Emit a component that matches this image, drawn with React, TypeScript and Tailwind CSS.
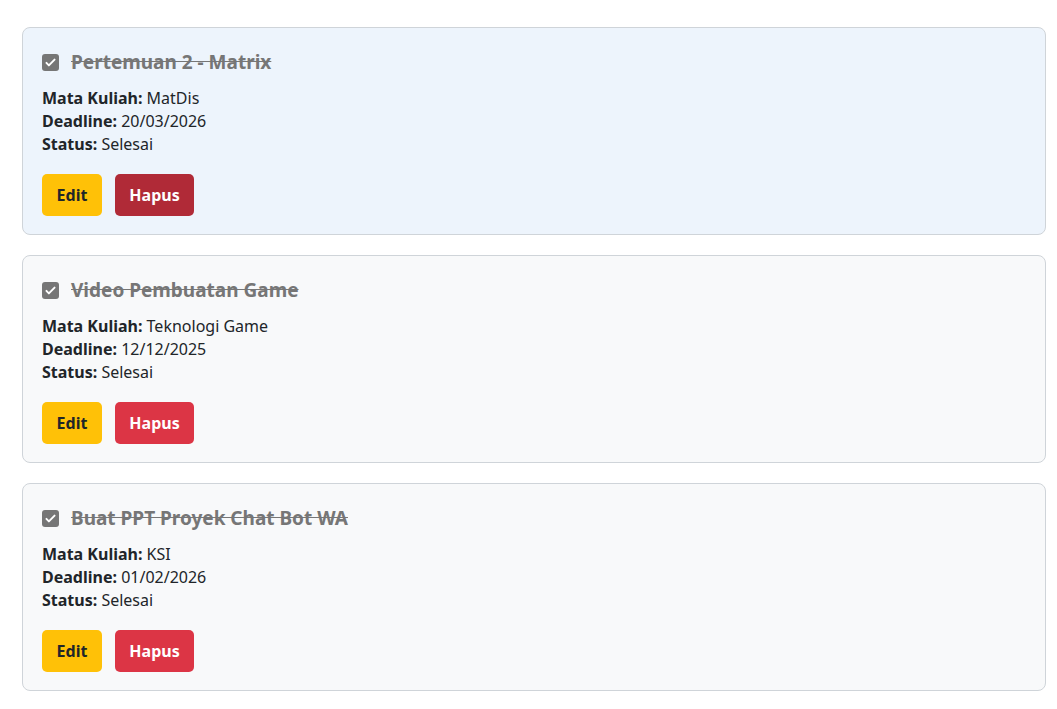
const tasks = [
  {
    title: "Pertemuan 2 - Matrix",
    matkul: "MatDis",
    deadline: "20/03/2026",
    status: "Selesai",
    active: true,
  },
  {
    title: "Video Pembuatan Game",
    matkul: "Teknologi Game",
    deadline: "12/12/2025",
    status: "Selesai",
    active: false,
  },
  {
    title: "Buat PPT Proyek Chat Bot WA",
    matkul: "KSI",
    deadline: "01/02/2026",
    status: "Selesai",
    active: false,
  },
];

function CheckBox() {
  return (
    <span className="flex h-[17px] w-[17px] shrink-0 items-center justify-center rounded-[3px] bg-[#767676]">
      <svg viewBox="0 0 16 16" className="h-[13px] w-[13px]" fill="none">
        <path d="M3 8.5l3 3 7-7" stroke="white" strokeWidth="2.4" strokeLinecap="round" strokeLinejoin="round" />
      </svg>
    </span>
  );
}

function TaskCard({ task }: { task: (typeof tasks)[number] }) {
  return (
    <div
      className={
        task.active
          ? "rounded-lg border border-[#cfd4d9] bg-[#edf4fc] pl-[19px] pr-5 pt-5 pb-[18px]"
          : "rounded-lg border border-[#cfd4d9] bg-[#f8f9fa] pl-[19px] pr-5 pt-5 pb-[18px]"
      }
    >
      {/* judul */}
      <div className="flex h-[29px] items-center gap-[12px]">
        <CheckBox />
        <span className="text-[19px] font-bold text-[#767676] line-through">{task.title}</span>
      </div>

      <div className="mt-[10px] text-[16px] leading-[23px] text-[#212529]">
        <p>
          <b>Mata Kuliah:</b> {task.matkul}
        </p>
        <p>
          <b>Deadline:</b> {task.deadline}
        </p>
        <p>
          <b>Status:</b> {task.status}
        </p>
      </div>

      <div className="mt-[18px] flex gap-[13px]">
        <button className="h-[42px] w-[60px] rounded-[5px] bg-[#ffc107] text-[16px] font-bold text-[#212529]">
          Edit
        </button>
        <button
          className={
            task.active
              ? "h-[42px] w-[79px] rounded-[5px] bg-[#b02a37] text-[16px] font-bold text-white"
              : "h-[42px] w-[79px] rounded-[5px] bg-[#dc3545] text-[16px] font-bold text-white"
          }
        >
          Hapus
        </button>
      </div>
    </div>
  );
}

export default function App() {
  return (
    <div
      className="min-h-screen bg-white pt-[27px] pl-[22px] pr-[11px]"
      style={{ fontFamily: '"Noto Sans", "Open Sans", sans-serif' }}
    >
      <div className="flex flex-col gap-5">
        {tasks.map((t) => (
          <TaskCard key={t.title} task={t} />
        ))}
      </div>
    </div>
  );
}
